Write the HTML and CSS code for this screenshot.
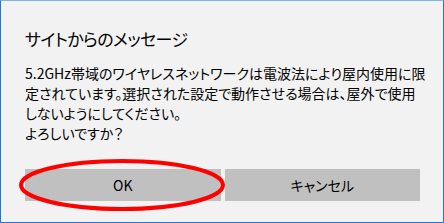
FILE: index.html
```html
<!DOCTYPE html>
<html lang="ja">
<head>
<meta charset="utf-8">
<title>サイトからのメッセージ</title>
<link rel="stylesheet" href="styles.css">
</head>
<body>
<div class="dialog">
  <div class="title">サイトからのメッセージ</div>
  <div class="message">5.2GHz帯域のワイヤレスネットワークは電波法により屋内使用に限<br>定されています。選択された設定で動作させる場合は、屋外で使用<br>しないようにしてください。<br>よろしいですか？</div>
  <div class="buttons">
    <div class="btn ok">OK
      <svg class="mark" width="210" height="56" viewBox="0 0 210 56"><ellipse cx="105" cy="28" rx="101" ry="24" fill="none" stroke="#ff0000" stroke-width="4"/></svg>
    </div>
    <div class="btn">キャンセル</div>
  </div>
</div>
</body>
</html>
```
FILE: styles.css
```css
html, body {
  margin: 0;
  padding: 0;
}
body {
  font-family: "Noto Sans CJK JP", "Noto Sans", sans-serif;
  font-feature-settings: "palt";
  color: #000;
}
.dialog {
  width: 444px;
  height: 223px;
  box-sizing: border-box;
  border: 1px solid #1a7bd0;
  border-top-color: #7fb6ea;
  background: #f2f2f2;
  padding: 0 23px 0 24px;
  display: flex;
  flex-direction: column;
}
.title {
  margin-top: 25px;
  font-size: 17px;
  letter-spacing: -0.6px;
  line-height: 26px;
}
.message {
  margin-top: 11px;
  font-size: 14px;
  line-height: 20px;
  white-space: nowrap;
}
.buttons {
  margin-top: 26px;
  display: grid;
  grid-template-columns: 1fr 1fr;
  gap: 4px;
}
.btn {
  position: relative;
  height: 32px;
  background: #c0c0c0;
  display: flex;
  align-items: center;
  justify-content: center;
  font-size: 14px;
}
.mark {
  position: absolute;
  left: -8px;
  top: -12px;
}
```
